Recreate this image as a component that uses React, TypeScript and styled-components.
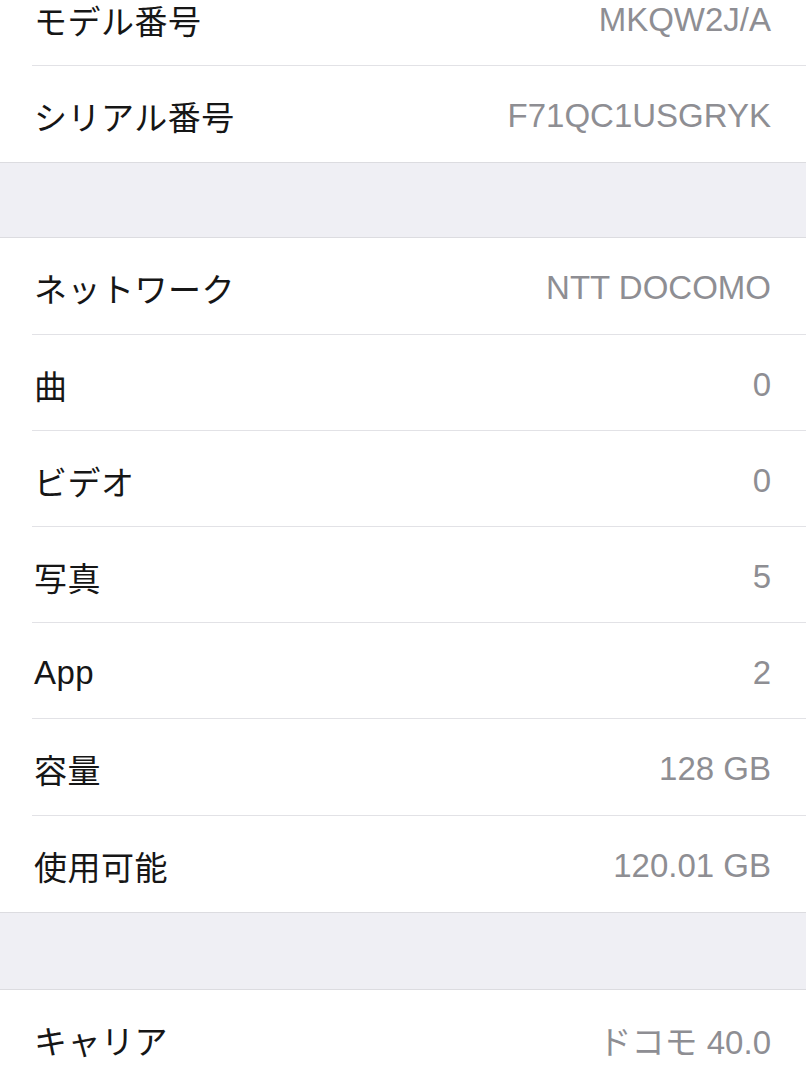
import React from "react";
import styled, { createGlobalStyle } from "styled-components";

const GlobalStyle = createGlobalStyle`
  html, body {
    margin: 0;
    padding: 0;
    background: #ffffff;
    overflow: hidden;
  }
  body {
    font-family: "Liberation Sans", "Noto Sans CJK JP", sans-serif;
    -webkit-font-smoothing: antialiased;
  }
`;

const Page = styled.div`
  width: 806px;
  height: 1080px;
  overflow: hidden;
  background: #efeff4;
`;

// the list is scrolled so the first row is cut at the top
const Scroller = styled.div`
  display: flex;
  flex-direction: column;
  margin-top: -31px;
`;

const Group = styled.section`
  display: flex;
  flex-direction: column;
  background: #ffffff;
  border-top: 1px solid #dcdce0;
  border-bottom: 1px solid #dcdce0;
`;

const Band = styled.div<{ $height: number }>`
  height: ${({ $height }) => $height}px;
  background: #efeff4;
`;

const Row = styled.div`
  position: relative;
  box-sizing: border-box;
  height: 96.2px;
  display: flex;
  align-items: center;
  justify-content: space-between;
  padding: 4px 35px 0 34px;
  font-size: 33px;
  &:not(:last-child)::after {
    content: "";
    position: absolute;
    left: 32px;
    right: 0;
    bottom: 0;
    height: 1px;
    background: #e2e2e6;
  }
`;

const Label = styled.span`
  color: #161616;
  letter-spacing: 0.5px;
`;

const Value = styled.span`
  color: #8e8e93;
`;

type Item = { label: string; value: string };

const groups: { items: Item[]; bandAfter?: number }[] = [
  {
    items: [
      { label: "モデル番号", value: "MKQW2J/A" },
      { label: "シリアル番号", value: "F71QC1USGRYK" },
    ],
    bandAfter: 74,
  },
  {
    items: [
      { label: "ネットワーク", value: "NTT DOCOMO" },
      { label: "曲", value: "0" },
      { label: "ビデオ", value: "0" },
      { label: "写真", value: "5" },
      { label: "App", value: "2" },
      { label: "容量", value: "128 GB" },
      { label: "使用可能", value: "120.01 GB" },
    ],
    bandAfter: 76,
  },
  {
    items: [{ label: "キャリア", value: "ドコモ 40.0" }],
  },
];

export default function App() {
  return (
    <Page>
      <GlobalStyle />
      <Scroller>
        {groups.map((g, gi) => (
          <React.Fragment key={gi}>
            <Group>
              {g.items.map((it) => (
                <Row key={it.label}>
                  <Label>{it.label}</Label>
                  <Value>{it.value}</Value>
                </Row>
              ))}
            </Group>
            {g.bandAfter ? <Band $height={g.bandAfter} /> : null}
          </React.Fragment>
        ))}
      </Scroller>
    </Page>
  );
}
